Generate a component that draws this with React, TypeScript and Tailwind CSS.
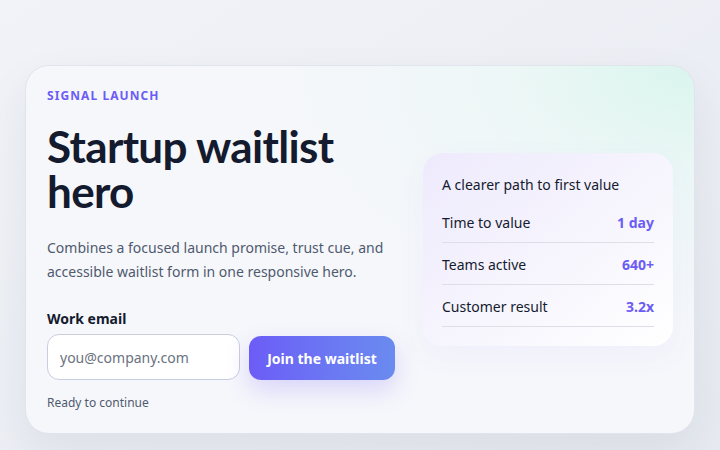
const stats = [
  { label: "Time to value", value: "1 day" },
  { label: "Teams active", value: "640+" },
  { label: "Customer result", value: "3.2x" },
];

export default function App() {
  return (
    <div
      className="min-h-[450px] w-full bg-gradient-to-br from-[#f1f3f8] to-[#e7eaf1] px-[25px] pt-[65px] pb-[17px]"
      style={{ fontFamily: '"Noto Sans", "Open Sans", sans-serif' }}
    >
      <section className="rounded-[24px] border border-[#e0e4ec] bg-[#f6f7fb] bg-[radial-gradient(ellipse_65%_75%_at_100%_0%,#daf5ee,rgba(232,247,244,0.6)_45%,rgba(246,247,251,0)_100%)] shadow-[0_18px_45px_rgba(30,41,59,0.07)]">
        <div className="flex items-center justify-between pl-[21px] pr-[21px] pt-[21px] pb-[22px]">
          {/* left: copy + form */}
          <div className="w-[350px]">
            <p className="text-[12px] font-bold uppercase leading-[18px] tracking-[0.09em] text-[#6c5cf6]">
              Signal launch
            </p>
            <h1
              className="mt-[19px] text-[44px] font-bold leading-[45px] tracking-[-0.015em] text-[#141b2e]"
              style={{ fontFamily: 'Lato, "Noto Sans", sans-serif' }}
            >
              Startup waitlist hero
            </h1>
            <p className="mt-[22px] text-[14px] leading-[23.5px] text-[#4f5a6e]">
              Combines a focused launch promise, trust cue, and accessible waitlist form in one responsive hero.
            </p>

            <label className="mt-[26px] block text-[14px] font-bold leading-[20px] text-[#141b2e]">Work email</label>
            <div className="mt-[5px] flex items-center gap-[9px]">
              <input
                type="email"
                placeholder="you@company.com"
                className="h-[46px] w-[193px] rounded-[12px] border border-[#c9cde0] bg-white px-[12px] text-[14px] text-[#141b2e] placeholder:text-[#6b7280] outline-none"
              />
              <button className="mt-[2px] h-[44px] w-[146px] rounded-[12px] bg-gradient-to-r from-[#6c5cf7] to-[#6a8bef] text-[14px] font-bold text-white shadow-[0_10px_24px_rgba(108,92,247,0.22)]">
                Join the waitlist
              </button>
            </div>
            <p className="mt-[15px] text-[12px] leading-[16px] text-[#4f5a6e]">Ready to continue</p>
          </div>

          {/* right: value card */}
          <div className="w-[250px] rounded-[20px] bg-gradient-to-br from-[#eeeafd] via-[#f6f4fd] to-[#ffffff] px-[19px] pt-[22px] pb-[19px] shadow-[0_10px_30px_rgba(99,102,241,0.05)]">
            <p className="text-[14px] leading-[20px] text-[#141b2e]">A clearer path to first value</p>
            <dl className="mt-[6px]">
              {stats.map((s) => (
                <div key={s.label} className="flex items-center justify-between border-b border-[#dcdfe8] pt-[12px] pb-[9px]">
                  <dt className="text-[14px] leading-[20px] text-[#141b2e]">{s.label}</dt>
                  <dd className="text-[14px] font-bold leading-[20px] text-[#6c5cf6]">{s.value}</dd>
                </div>
              ))}
            </dl>
          </div>
        </div>
      </section>
    </div>
  );
}
